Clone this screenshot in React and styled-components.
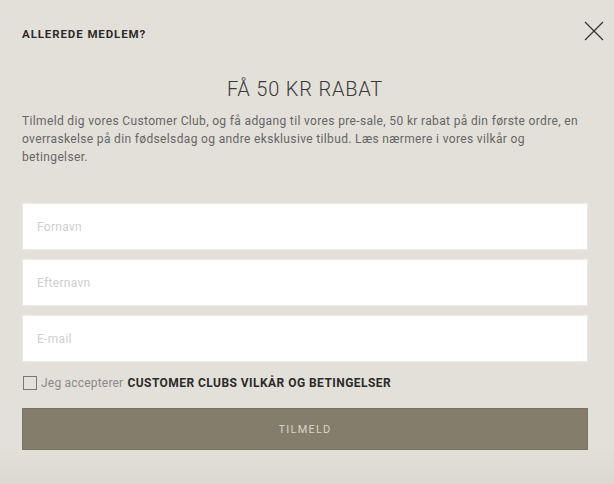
import React, { useState } from "react";
import styled, { createGlobalStyle } from "styled-components";

const GlobalStyle = createGlobalStyle`
  html, body {
    margin: 0;
    padding: 0;
    background: #e3e0d9;
  }
  * { box-sizing: border-box; }
`;

const Modal = styled.div`
  position: relative;
  width: 614px;
  height: 484px;
  padding: 27px 26px 0 22px;
  background: linear-gradient(to bottom, #e3e0d9 0%, #e3e0d9 92%, #dcd9d1 100%);
  font-family: Roboto, "Liberation Sans", sans-serif;
  color: #333;
  overflow: hidden;
`;

const TopLine = styled.div`
  font-size: 11.5px;
  font-weight: 700;
  letter-spacing: 0.9px;
  color: #2b2b2b;
  line-height: 14px;
`;

const CloseButton = styled.button`
  position: absolute;
  top: 20px;
  right: 9px;
  width: 22px;
  height: 22px;
  padding: 0;
  border: 0;
  background: none;
  cursor: pointer;
`;

const Title = styled.h1`
  margin: 35px 0 0;
  text-align: center;
  font-size: 20px;
  font-weight: 300;
  letter-spacing: 0.8px;
  color: #3a3a3a;
  line-height: 26px;
`;

const Intro = styled.p`
  margin: 10px 0 0;
  font-size: 12px;
  line-height: 18px;
  color: #666;
  letter-spacing: 0.35px;
`;

const Form = styled.form`
  display: flex;
  flex-direction: column;
  gap: 9px;
  margin-top: 37px;
`;

const Field = styled.input`
  width: 566px;
  height: 47px;
  padding: 0 14px;
  border: 1px solid #eceae6;
  background: #fff;
  font-family: inherit;
  font-size: 12px;
  letter-spacing: 0.3px;
  color: #333;
  outline: none;
  &::placeholder { color: #cfcfcf; }
`;

const Consent = styled.label`
  display: flex;
  align-items: center;
  gap: 4px;
  margin-top: 5px;
  font-size: 12px;
  letter-spacing: 0.2px;
  color: #8a8a8a;
  cursor: pointer;
`;

const Box = styled.span`
  width: 14px;
  height: 14px;
  margin-left: 1px;
  border: 1.5px solid #777;
  background: ${p => (p.$checked ? "#857d6b" : "transparent")};
`;

const Strong = styled.strong`
  font-weight: 700;
  color: #2b2b2b;
  letter-spacing: 0.45px;
`;

const Submit = styled.button`
  width: 566px;
  height: 42px;
  margin-top: 9px;
  border: 1px solid #7b7463;
  background: #857d6b;
  color: #d9d3c7;
  font-family: inherit;
  font-size: 11px;
  letter-spacing: 1.2px;
  cursor: pointer;
`;

const App = () => {
  const [accepted, setAccepted] = useState(false);

  return (
    <>
      <GlobalStyle />
      <Modal>
        <TopLine>ALLEREDE MEDLEM?</TopLine>
        <CloseButton aria-label="Luk">
          <svg width="22" height="22" viewBox="0 0 22 22">
            <path d="M2 2L20 20M20 2L2 20" stroke="#333" strokeWidth="1.2" />
          </svg>
        </CloseButton>

        <Title>FÅ 50 KR RABAT</Title>
        <Intro>
          Tilmeld dig vores Customer Club, og få adgang til vores pre-sale, 50 kr
          rabat på din første ordre, en overraskelse på din fødselsdag og andre
          eksklusive tilbud. Læs nærmere i vores vilkår og betingelser.
        </Intro>

        <Form onSubmit={e => e.preventDefault()}>
          <Field placeholder="Fornavn" />
          <Field placeholder="Efternavn" />
          <Field placeholder="E-mail" type="email" />
          <Consent onClick={() => setAccepted(!accepted)}>
            <Box $checked={accepted} />
            Jeg accepterer <Strong>CUSTOMER CLUBS VILKÅR OG BETINGELSER</Strong>
          </Consent>
          <Submit type="submit">TILMELD</Submit>
        </Form>
      </Modal>
    </>
  );
};

export default App;
